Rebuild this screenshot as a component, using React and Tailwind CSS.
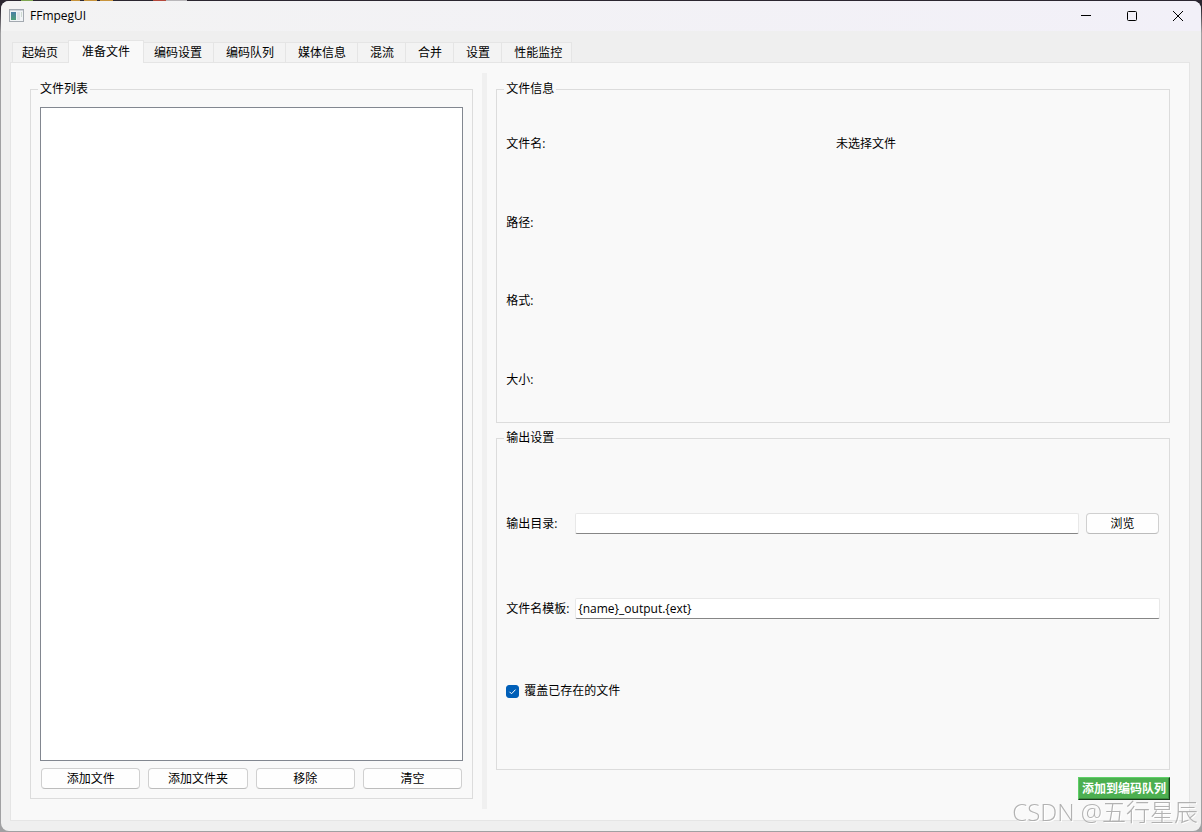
import React, { useState } from 'react';

const TABS = ['起始页', '准备文件', '编码设置', '编码队列', '媒体信息', '混流', '合并', '设置', '性能监控'];

const FILE_INFO = [
  { label: '文件名:', value: '未选择文件' },
  { label: '路径:', value: '' },
  { label: '格式:', value: '' },
  { label: '大小:', value: '' },
];

function TitleBar() {
  return (
    <header className="flex h-[30px] items-center bg-linear-to-r from-[#f3f3f3] to-[#f2f0f8]">
      <svg className="mb-0.5 ml-2 h-[13px] w-[15px]" viewBox="0 0 15 13" fill="none">
        <rect x="0.5" y="0.5" width="14" height="12" fill="#f1f4f6" stroke="#a3a9b0" />
        <rect x="1" y="1" width="13" height="1" fill="#cfd4da" />
        <rect x="2" y="3" width="5" height="8" fill="url(#appIcon)" />
        <rect x="8" y="3" width="3" height="8" fill="#dfe3e6" />
        <rect x="12" y="3" width="1" height="5" fill="#cdd9d0" />
        <defs>
          <linearGradient id="appIcon" x1="0" y1="0" x2="0" y2="1">
            <stop stopColor="#4a7fa5" />
            <stop offset="1" stopColor="#4f9f78" />
          </linearGradient>
        </defs>
      </svg>
      <h1 className="ml-1.5 grow">FFmpegUI</h1>
      <button type="button" aria-label="最小化" className="flex h-full w-[46px] items-center justify-center">
        <svg width="10" height="10" viewBox="0 0 10 10" stroke="#000">
          <path d="M0 4.5h10" />
        </svg>
      </button>
      <button type="button" aria-label="最大化" className="flex h-full w-[46px] items-center justify-center">
        <svg width="10" height="10" viewBox="0 0 10 10" fill="none" stroke="#000">
          <rect x="0.5" y="0.5" width="9" height="9" rx="1" />
        </svg>
      </button>
      <button type="button" aria-label="关闭" className="flex h-full w-[46px] items-center justify-center">
        <svg width="10" height="10" viewBox="0 0 10 10" stroke="#000">
          <path d="M0 0l10 10M10 0L0 10" />
        </svg>
      </button>
    </header>
  );
}

function TabBar({ active, onChange }) {
  const tabClass = (tab, index) => {
    if (tab === active) {
      return 'relative z-10 -mx-0.5 -mb-px h-[23px] border-x border-t border-[#e5e5e5] bg-[#f9f9f9] px-[13px] pb-px';
    }
    if (index === 0) {
      return 'ml-0.5 h-5 border-x border-t border-[#e5e5e5] bg-[#f3f3f3] pt-px pl-[9px] pr-[11px]';
    }
    return 'h-5 border-r border-t border-[#e5e5e5] bg-[#f3f3f3] pt-px pl-3 pr-[11px] last:pr-[9px]';
  };

  return (
    <div role="tablist" className="flex h-[31px] items-end px-[9px]">
      {TABS.map((tab, index) => (
        <button
          key={tab}
          type="button"
          role="tab"
          aria-selected={tab === active}
          onClick={() => onChange(tab)}
          className={tabClass(tab, index)}
        >
          {tab}
        </button>
      ))}
    </div>
  );
}

function GroupBox({ title, className, children }) {
  return (
    <fieldset className={`flex min-w-0 flex-col border border-[#dcdcdc] px-[9px] ${className}`}>
      <legend className="-ml-0.5 px-0.5">{title}</legend>
      {children}
    </fieldset>
  );
}

function PushButton({ className, children }) {
  return (
    <button
      type="button"
      className={`h-[21px] rounded border border-[#d0d0d0] border-b-[#bcbcbc] bg-[#fefefe] pt-px ${className}`}
    >
      {children}
    </button>
  );
}

function LineEdit(props) {
  return (
    <input
      type="text"
      className="h-[21px] min-w-0 grow rounded-xs border border-[#e8e8e8] border-b-[#868686] bg-white px-0.5 outline-none"
      {...props}
    />
  );
}

function FileList() {
  return (
    <section className="flex w-2/5 min-w-0 flex-col px-[9px] pt-2 pb-2.5">
      <GroupBox title="文件列表" className="grow pt-2.5 pb-[9px]">
        <ul aria-label="文件列表" className="grow border border-[#828790] bg-white" />
        <div className="mt-[7px] flex gap-2 px-px">
          <PushButton className="flex-1">添加文件</PushButton>
          <PushButton className="flex-1">添加文件夹</PushButton>
          <PushButton className="flex-1">移除</PushButton>
          <PushButton className="flex-1">清空</PushButton>
        </div>
      </GroupBox>
    </section>
  );
}

function FileDetails() {
  const [outputDir, setOutputDir] = useState('');
  const [template, setTemplate] = useState('{name}_output.{ext}');
  const [overwrite, setOverwrite] = useState(true);

  return (
    <section className="flex w-3/5 min-w-0 flex-col px-[9px] pt-2 pb-[9px]">
      <GroupBox title="文件信息" className="flex-1 pt-2 pb-[3px]">
        <dl className="grid grow auto-rows-fr">
          {FILE_INFO.map((row) => (
            <div key={row.label} className="grid grid-cols-2 items-center gap-1.5">
              <dt>{row.label}</dt>
              <dd>{row.value}</dd>
            </div>
          ))}
        </dl>
      </GroupBox>

      <GroupBox title="输出设置" className="mt-[7px] flex-1 pt-[3px] pb-1.5">
        <div className="flex grow flex-col justify-evenly">
          <div className="flex items-center">
            <label htmlFor="outputDir" className="w-[69px] shrink-0 whitespace-nowrap">输出目录:</label>
            <LineEdit id="outputDir" value={outputDir} onChange={(e) => setOutputDir(e.target.value)} />
            <PushButton className="mr-px ml-[7px] w-[73px]">浏览</PushButton>
          </div>
          <div className="flex items-center">
            <label htmlFor="template" className="w-[69px] shrink-0 whitespace-nowrap">文件名模板:</label>
            <LineEdit id="template" value={template} onChange={(e) => setTemplate(e.target.value)} />
          </div>
          <label className="flex items-center gap-[5px] self-start">
            <span className="grid size-[13px]">
              <input
                type="checkbox"
                checked={overwrite}
                onChange={(e) => setOverwrite(e.target.checked)}
                className="peer col-start-1 row-start-1 size-[13px] appearance-none rounded-[3px] border border-[#868686] bg-white checked:border-[#005fb8] checked:bg-[#005fb8]"
              />
              <svg
                className="pointer-events-none invisible col-start-1 row-start-1 peer-checked:visible"
                viewBox="0 0 13 13"
                fill="none"
                stroke="#fff"
              >
                <path d="M3.5 6.8l2 2 4-4.2" />
              </svg>
            </span>
            覆盖已存在的文件
          </label>
        </div>
      </GroupBox>

      <button
        type="button"
        className="mt-[7px] h-[23px] self-end border border-t-[#5fd068] border-r-[#16381a] border-b-[#16381a] border-l-[#5fd068] bg-[#4caf50] px-[3px] font-bold whitespace-nowrap text-white shadow-[inset_-1px_-1px_0_#3a8a3d]"
      >
        添加到编码队列
      </button>
    </section>
  );
}

function App() {
  const [activeTab, setActiveTab] = useState('准备文件');

  return (
    <div className="flex min-h-screen flex-col bg-[linear-gradient(90deg,#2b2630_21px,#7fa650_21px_33px,#2b2630_33px_71px,#c8943c_71px_80px,#2b2630_80px_84px,#c8943c_84px_97px,#2b2630_97px_100px,#c8943c_100px_113px,#2b2630_113px_153px,#b5483c_153px_166px,#b9b7ba_166px_187px,#2b2630_187px),linear-gradient(#2b2630_1%,#a0a0a2_4%)] bg-size-[100%_1px,100%_100%] bg-no-repeat p-px font-['Open_Sans','Noto_Sans_CJK_SC',sans-serif] text-xs text-black">
      <div className="flex grow flex-col overflow-hidden rounded-lg bg-[#efefef]">
        <TitleBar />
        <TabBar active={activeTab} onChange={setActiveTab} />
        <main className="mr-[11px] mb-2.5 ml-[9px] flex grow border border-[#e5e5e5] bg-[#f9f9f9] px-2.5 pt-2.5 pb-[11px]">
          <FileList />
          <div role="separator" className="w-[5px] shrink-0 bg-[#f0f0f0]" />
          <FileDetails />
        </main>
      </div>
      <p className="pointer-events-none fixed right-1 bottom-1 text-2xl leading-8 font-light whitespace-nowrap text-[#a0a0a0]/80 text-shadow-[1px_1px_0_#ffffff]">
        CSDN @五行星辰
      </p>
    </div>
  );
}

export default App;
